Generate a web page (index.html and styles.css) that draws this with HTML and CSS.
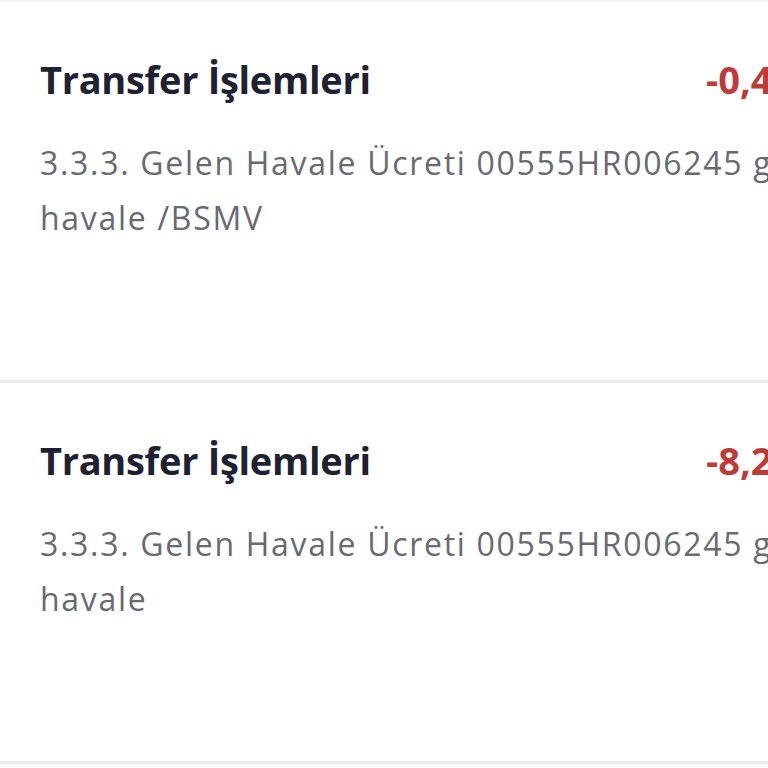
FILE: index.html
```html
<!DOCTYPE html>
<html lang="tr">
<head>
<meta charset="utf-8">
<title>İşlemler</title>
<link rel="stylesheet" href="styles.css">
</head>
<body>
<div class="list">
  <div class="item">
    <div class="head">
      <div class="title">Transfer İşlemleri</div>
      <div class="amount">-0,41 TL</div>
    </div>
    <div class="desc">3.3.3. Gelen Havale Ücreti 00555HR006245 gelen havale /BSMV</div>
  </div>
  <div class="item">
    <div class="head">
      <div class="title">Transfer İşlemleri</div>
      <div class="amount">-8,20 TL</div>
    </div>
    <div class="desc">3.3.3. Gelen Havale Ücreti 00555HR006245 gelen havale</div>
  </div>
</div>
</body>
</html>
```
FILE: styles.css
```css
html, body {
  margin: 0;
  padding: 0;
  background: #ffffff;
  overflow: hidden;
}
body {
  font-family: "Open Sans", "Noto Sans", sans-serif;
  width: 768px;
  height: 768px;
}
.list {
  width: 1000px;
  border-top: 2px solid #f3f3f3;
}
.item {
  border-bottom: 3px solid #ececec;
  padding: 54px 0 135px 40px;
}
.head {
  display: grid;
  grid-template-columns: 666px auto;
  align-items: center;
  height: 46px;
}
.title {
  font-size: 38px;
  font-weight: 700;
  letter-spacing: -0.3px;
  color: #1e2133;
  line-height: 46px;
}
.amount {
  font-size: 38px;
  font-weight: 700;
  color: #c03a3a;
  line-height: 46px;
}
.desc {
  margin-top: 33px;
  width: 860px;
  font-size: 32px;
  letter-spacing: 1.7px;
  line-height: 55px;
  color: #676a72;
}
```
